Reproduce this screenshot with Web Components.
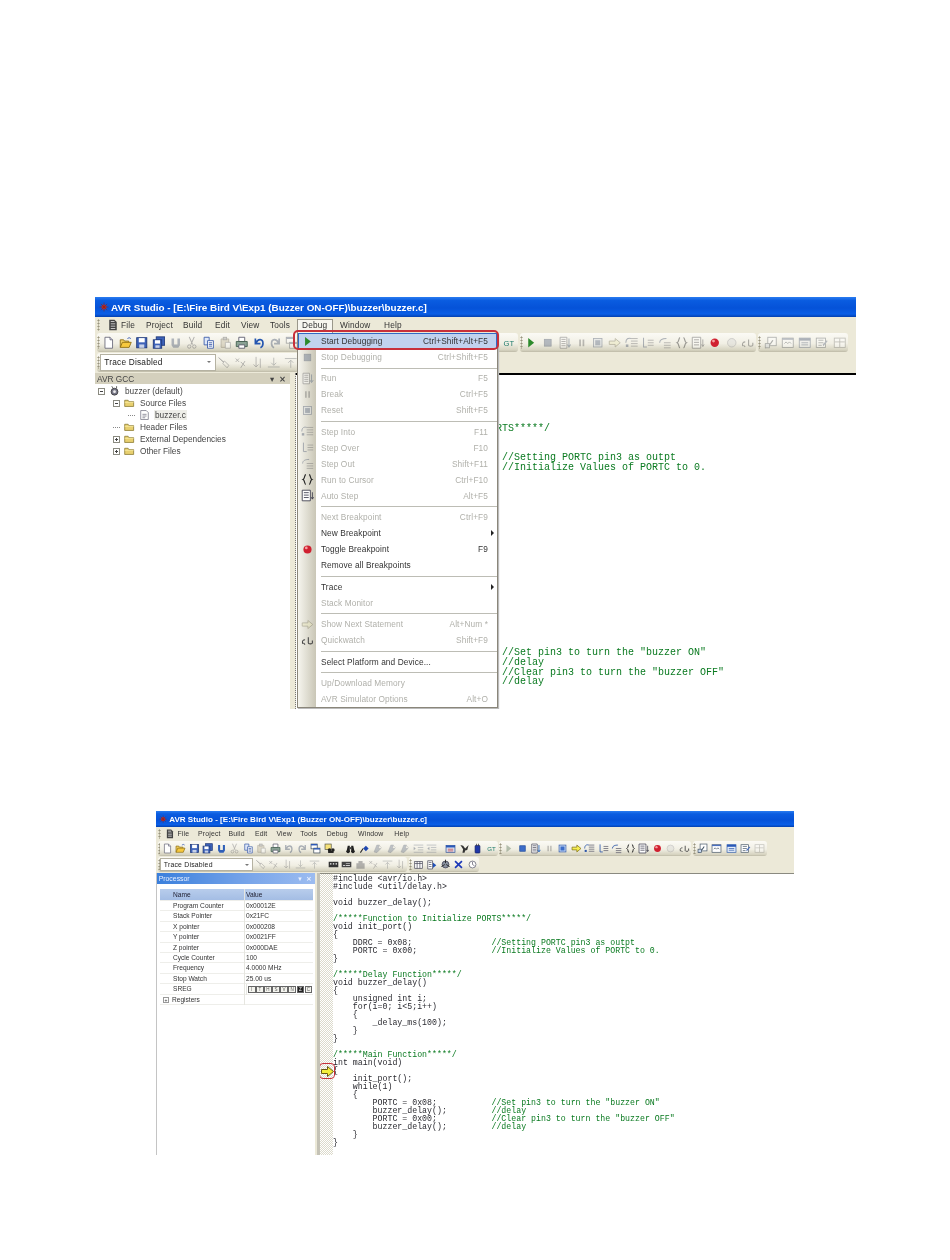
<!DOCTYPE html>
<html>
<head>
<meta charset="utf-8">
<title>AVR Studio</title>
<style>
  html, body { margin: 0; background: #fff; }
</style>
</head>
<body>
<doc-page>
  <ide-window size="large">
    <menu-bar></menu-bar>
    <tool-row>
      <tool-strip icons="new open save saveall ~blob ~cut copy ~paste print undo ~redo ~windows findwin || find diamond ~flag ~flag ~flag ~indent ~outdent | frm hammer chip gt"></tool-strip>
      <tool-strip icons="play ~stop ~run ~pause ~reset ~arrow ~stepin ~stepover ~stepout ~braces ~auto bp ~circle ~qw"></tool-strip>
      <tool-strip wide icons="~w1 ~w2 ~w3 ~w4 ~w5"></tool-strip>
    </tool-row>
    <tool-row>
      <tool-strip combo="Trace Disabled" icons="~t1 ~t2 ~t3 ~t4 ~t5"></tool-strip>
    </tool-row>
    <side-panel slot="panel" heading="AVR GCC">
      <tree-row level="0" exp="minus" icon="gear">buzzer (default)</tree-row>
      <tree-row level="1" exp="minus" icon="folder">Source Files</tree-row>
      <tree-row level="2" exp="dots" icon="file" selected>buzzer.c</tree-row>
      <tree-row level="1" exp="dots" icon="folder">Header Files</tree-row>
      <tree-row level="1" exp="plus" icon="folder">External Dependencies</tree-row>
      <tree-row level="1" exp="plus" icon="folder">Other Files</tree-row>
    </side-panel>
    <code-view slot="code" black from-col="31"></code-view>
    <debug-menu slot="overlay"></debug-menu>
  </ide-window>

  <ide-window size="small">
    <menu-bar plain></menu-bar>
    <tool-row>
      <tool-strip icons="new open save saveall blob ~cut copy ~paste print ~undo ~redo windows findwin || find diamond ~flag ~flag ~flag ~indent ~outdent | frm hammer chip gt"></tool-strip>
      <tool-strip icons="~play stop run ~pause reset arrow stepin stepover stepout braces auto bp ~circle qw"></tool-strip>
      <tool-strip wide icons="w1 w2 w3 w4 ~w5"></tool-strip>
    </tool-row>
    <tool-row>
      <tool-strip combo="Trace Disabled" icons="~t1 ~t2 ~t3 ~t4 ~t5 | mem1 mem2 ~mem3 ~t2 ~t5 ~t3"></tool-strip>
      <tool-strip icons="p1 p2 p3 xred p4"></tool-strip>
    </tool-row>
    <side-panel slot="panel" heading="Processor" active>
      <proc-table></proc-table>
    </side-panel>
    <code-view slot="code" marker gutter></code-view>
  </ide-window>
</doc-page>

<script>
const ICONS = {
  new: '<path d="M3.5 1.5h6l3 3v10h-9z" fill="#fff" stroke="#667"/><path d="M9.5 1.5v3h3" fill="#dde" stroke="#667"/>',
  open: '<path d="M1.5 13.5v-9h4l1 1.5h5v2" fill="#f2d060" stroke="#8a6a10"/><path d="M1.5 13.5l2.5-6h10.5l-2.5 6z" fill="#f7c93e" stroke="#8a6a10"/><path d="M10 3q2-2 4 0" fill="none" stroke="#2a50b0"/>',
  save: '<rect x="2" y="2" width="12" height="12" fill="#3d62b8" stroke="#1c3575"/><rect x="4.5" y="2.5" width="7" height="5" fill="#fff"/><rect x="5" y="10" width="6" height="4" fill="#c8d2e8"/>',
  saveall: '<rect x="5" y="1" width="10" height="10" fill="#3d62b8" stroke="#1c3575"/><rect x="1.5" y="4.5" width="10" height="10" fill="#3d62b8" stroke="#1c3575"/><rect x="3.5" y="5" width="6" height="4" fill="#fff"/><rect x="4" y="11" width="5" height="3" fill="#c8d2e8"/>',
  blob: '<path d="M3 3h3v7h4V3h3v8l-2 3H5l-2-3z" fill="#2f5fb8"/>',
  cut: '<path d="M5 1l4 9M11 1l-4 9" stroke="#556" stroke-width="1.2" fill="none"/><circle cx="5" cy="12.5" r="2" fill="none" stroke="#446"/><circle cx="11" cy="12.5" r="2" fill="none" stroke="#446"/>',
  copy: '<path d="M2.5 1.5h6v9h-6z" fill="#dfe8f8" stroke="#3558a8"/><path d="M6.5 5.5h7v9h-7z" fill="#fff" stroke="#3558a8"/><path d="M8 8h4M8 10h4M8 12h4" stroke="#3558a8"/>',
  paste: '<path d="M2.5 3.5h9v10h-9z" fill="#d8b860" stroke="#7a6020"/><rect x="5" y="1.5" width="4" height="3" fill="#999" stroke="#555"/><path d="M7.5 7.5h6v7h-6z" fill="#fff" stroke="#667"/>',
  print: '<path d="M4.5 1.5h7v5h-7z" fill="#fff" stroke="#556"/><path d="M1.5 6.5h13v6h-13z" fill="#8aa294" stroke="#3c5a4a"/><path d="M4.5 10.5h7v4h-7z" fill="#fff" stroke="#556"/>',
  undo: '<path d="M4 3v6h6M5 8c2-5 8-5 8 1 0 2-1 4-3 5" fill="none" stroke="#2456b0" stroke-width="2"/>',
  redo: '<path d="M12 3v6H6M11 8C9 3 3 3 3 9c0 2 1 4 3 5" fill="none" stroke="#2456b0" stroke-width="2"/>',
  windows: '<rect x="1.5" y="1.5" width="9" height="7" fill="#fff" stroke="#345"/><rect x="1.5" y="1.5" width="9" height="2" fill="#2a58b8"/><rect x="5.5" y="7.5" width="9" height="7" fill="#fff" stroke="#345"/><rect x="5.5" y="7.5" width="9" height="2" fill="#2a58b8"/>',
  findwin: '<rect x="1.5" y="1.5" width="9" height="8" fill="#f6e27a" stroke="#554"/><circle cx="8" cy="10" r="2.5" fill="#222"/><circle cx="13" cy="10" r="2.5" fill="#222"/><rect x="6" y="11" width="8" height="3.5" fill="#222"/>',
  find: '<path d="M2 13l2-9h3v9zM9 13V4h3l2 9z" fill="#222"/><circle cx="4.5" cy="12.5" r="2.5" fill="#222"/><circle cx="11.5" cy="12.5" r="2.5" fill="#222"/><rect x="6" y="6" width="4" height="3" fill="#444"/>',
  diamond: '<path d="M10 4l4 4-4 4-4-4z" fill="#1f47b0"/><path d="M2 14l4-6" stroke="#222" stroke-width="1.5"/>',
  flag: '<path d="M3 13l4-10h4l-2 5h4l-6 6z" fill="#5a7fc4" stroke="#2c4a8a" stroke-width=".7"/><path d="M10 3l4 4" stroke="#888"/>',
  indent: '<path d="M1 3h14M7 6.5h8M7 10h8M1 13.5h14" stroke="#3558a8"/><path d="M1 5.5l3 2.5-3 2.5z" fill="#3558a8"/>',
  outdent: '<path d="M1 3h14M7 6.5h8M7 10h8M1 13.5h14" stroke="#3558a8"/><path d="M5 5.5L2 8l3 2.5z" fill="#3558a8"/>',
  frm: '<rect x="1.5" y="3.5" width="13" height="10" fill="#dbe4f4" stroke="#2a4a90"/><rect x="1.5" y="3.5" width="13" height="3" fill="#2a58b8"/><path d="M4 9h8M4 11.5h8" stroke="#c03030"/>',
  hammer: '<path d="M2 3l4 1 3 4 5-5-2 7-3 1-1 3H5l1-5z" fill="#333"/>',
  chip: '<rect x="4.5" y="3.5" width="7" height="11" rx="1" fill="#2038a8" stroke="#101c60"/><path d="M6 1h1v3H6zM9 1h1v3H9z" fill="#333"/>',
  gt: '<text x="8" y="11.5" text-anchor="middle" font-family="Liberation Sans, sans-serif" font-size="9" fill="#1c7a6a">GT</text>',
  play: '<path d="M5 2.5l7 5.5-7 5.5z" fill="#2c8a2c"/>',
  stop: '<rect x="4" y="4" width="8" height="8" fill="#3c6cc8" stroke="#204a9a"/>',
  run: '<path d="M2.5 1.5h8v13h-8z" fill="#fff" stroke="#445"/><path d="M4 4h5M4 6.5h5M4 9h5M4 11.5h5" stroke="#445"/><path d="M13 3v9M11 10l2 3 2-3" fill="none" stroke="#1c5cb8" stroke-width="1.2"/>',
  pause: '<path d="M5 4h2v8H5zM9 4h2v8H9z" fill="#666"/>',
  reset: '<rect x="3" y="3" width="10" height="10" fill="#cfe0f8" stroke="#2b55a8"/><rect x="5" y="5" width="6" height="6" fill="#3c6cc8"/>',
  arrow: '<path d="M1.5 6h7V3l6 5-6 5v-3h-7z" fill="#f6ee50" stroke="#7a6a10"/>',
  stepin: '<path d="M7 3h8M7 6h8M7 9h8M7 12h8" stroke="#556"/><path d="M1 8c0-5 3-6 6-5" fill="none" stroke="#2b55a8" stroke-width="1.2"/><path d="M1 10h3v3H1z" fill="#2b55a8"/>',
  stepover: '<path d="M8 5h7M8 8h7M8 11h7" stroke="#556"/><path d="M3 2v11h4" fill="none" stroke="#2b55a8" stroke-width="1.2"/>',
  stepout: '<path d="M7 8h8M7 11h8M7 14h8" stroke="#556"/><path d="M2 8c0-4 4-5 8-5" fill="none" stroke="#2b55a8" stroke-width="1.2"/>',
  braces: '<path d="M6 2C4 2 5 7 2.5 8 5 9 4 14 6 14M10 2c2 0 1 5 3.5 6-2.5 1-1.5 6-3.5 6" fill="none" stroke="#222" stroke-width="1.4"/>',
  auto: '<path d="M1.5 1.5h10v13h-10z" fill="#fff" stroke="#334"/><path d="M3.5 4.5h6M3.5 7.5h6M3.5 10.5h6" stroke="#334"/><path d="M14 4v8M12.5 10l1.5 2.5 1.5-2.5" fill="none" stroke="#334"/>',
  bp: '<circle cx="8" cy="8" r="5" fill="#d02030"/><circle cx="6.5" cy="6" r="1.7" fill="#f4a0a0"/>',
  circle: '<circle cx="8" cy="8" r="5" fill="#d8d8d0" stroke="#889"/>',
  qw: '<path d="M2 12c-1-4 1-5 3-5M3 11l2 2M9 4v7c0 1.5 5 1.5 5 0V8" fill="none" stroke="#444" stroke-width="1.3"/>',
  w1: '<rect x="4.5" y="1.5" width="10" height="10" fill="#fff" stroke="#456"/><path d="M1.5 14c3-1 6-4 9-9" fill="none" stroke="#456" stroke-width="1.5"/><rect x="1.5" y="9" width="5" height="5" fill="#c8d8f0" stroke="#456"/>',
  w2: '<rect x="1.5" y="2.5" width="13" height="11" fill="#fff" stroke="#456"/><rect x="1.5" y="2.5" width="13" height="2" fill="#4a70c0"/><path d="M4 9l2-2 2 2 2-2 2 2" fill="none" stroke="#456"/>',
  w3: '<rect x="1.5" y="2.5" width="13" height="11" fill="#e6eefa" stroke="#2a58a8"/><rect x="1.5" y="2.5" width="13" height="3" fill="#2a58b8"/><path d="M4 8h8M4 10.5h8" stroke="#2a58a8"/>',
  w4: '<rect x="1.5" y="2.5" width="11" height="11" fill="#fff" stroke="#456"/><path d="M4 5h6M4 8h6M4 11h4" stroke="#456"/><path d="M9 10l5-5 1 1-5 6z" fill="#4a70c0"/>',
  w5: '<rect x="1.5" y="2.5" width="13" height="11" fill="#fff" stroke="#776"/><path d="M8 3v10M2 7h12" stroke="#776"/>',
  t1: '<path d="M2 2l5 5 2-1 5 5-2 3-5-5 1-2-6-5z" fill="none" stroke="#556"/>',
  t2: '<path d="M2 3l4 4M6 3L2 7M8 7l5 5M13 6l-5 8" fill="none" stroke="#556" stroke-width="1.1"/>',
  t3: '<path d="M6 1v12M3 10l3 3 3-3M11 3v11" fill="none" stroke="#556"/>',
  t4: '<path d="M1 13h14M8 2v9M5 8l3 3 3-3" fill="none" stroke="#567"/>',
  t5: '<path d="M1 3h14M8 14V5M5 8l3-3 3 3" fill="none" stroke="#567"/>',
  mem1: '<rect x="1" y="4" width="14" height="8" fill="#333"/><path d="M3 6h2v2H3zM7 6h2v2H7zM11 6h2v2h-2z" fill="#fff"/>',
  mem2: '<rect x="1" y="4" width="14" height="8" fill="#444"/><path d="M3 9h3v1H3zM7 6h6v1H7zM7 9h6v1H7z" fill="#fff"/>',
  mem3: '<path d="M2 14V6h3V3h6v3h3v8z" fill="#556"/>',
  p1: '<rect x="2.5" y="3.5" width="11" height="10" fill="#fff" stroke="#445"/><path d="M2.5 6.5h11M6 3.5v10M10 3.5v10" stroke="#445"/>',
  p2: '<path d="M2.5 2.5h7v12h-7z" fill="#fff" stroke="#445"/><path d="M4 5h4M4 8h4M4 11h4" stroke="#445"/><path d="M10 5l5 4-5 4z" fill="#2050b8"/>',
  p3: '<circle cx="8" cy="8" r="5" fill="#8a92a0" stroke="#334"/><path d="M8 1v5M2 11l5-3M14 11l-5-3" stroke="#222" stroke-width="1.3"/>',
  xred: '<path d="M3 3l10 10M13 3L3 13" stroke="#1c38b8" stroke-width="2.4"/>',
  p4: '<circle cx="8" cy="8" r="5" fill="#fff" stroke="#556"/><path d="M8 4v4l3 2" fill="none" stroke="#556"/>',
  gear: '<circle cx="8" cy="9" r="5" fill="#778" stroke="#222"/><circle cx="8" cy="9" r="2" fill="#eee"/><path d="M4 1l2 3M11 1v3" stroke="#222"/>',
  folder: '<path d="M1 13V4h5l1 2h7v7z" fill="#e8d070" stroke="#7a6a20"/><path d="M1 7h13" stroke="#fff4b0"/>',
  file: '<path d="M2.5 1.5h8l3 3v10h-11z" fill="#fff" stroke="#667"/><path d="M5 7h6M5 9.5h6M5 12h4" stroke="#667"/>',
  doc: '<path d="M3 1h7l3 3v11H3z" fill="#444"/><path d="M5 3h5v1H5zM5 6h6v1H5zM5 9h6v1H5zM5 12h6v1H5z" fill="#eee"/>',
  chipred: '<circle cx="8" cy="8" r="4" fill="#b83030"/><path d="M8 1v14M1 8h14M3 3l10 10M13 3L3 13" stroke="#8a2020"/>'
};

class DocPage extends HTMLElement {
  constructor() {
    super();
    this.attachShadow({ mode: 'open' }).innerHTML = `
      <style>
        :host { display: flex; flex-direction: column; padding-top: 297px; min-height: 963px; box-sizing: content-box; }
      </style>
      <slot></slot>`;
  }
}

class ToolIcon extends HTMLElement {
  constructor() {
    super();
    this.attachShadow({ mode: 'open' });
  }
  connectedCallback() {
    const name = this.getAttribute('name');
    this.shadowRoot.innerHTML = `
      <style>
        :host { display: inline-flex; align-items: center; justify-content: center; flex: none;
                width: var(--icon-box, var(--step)); }
        :host([faded]) svg { filter: grayscale(.7) opacity(.42); }
        svg { width: var(--icon, 14px); height: var(--icon, 14px); display: block; }
      </style>
      <svg viewBox="0 0 16 16">${ICONS[name] || ''}</svg>`;
  }
}

class IdeWindow extends HTMLElement {
  constructor() {
    super();
    this.attachShadow({ mode: 'open' }).innerHTML = `
      <style>
        :host { display: block; position: relative; overflow: hidden; box-sizing: border-box; background: #fff;
                font-family: "Liberation Sans", Arial, sans-serif; color: #222; filter: blur(.3px); }
        :host([size=large]) { margin-left: 95px; width: 761px; height: 412px;
                --u: 1px; --step: 16.7px; --icon: 13.5px; --title-h: 20px; --menu-h: 16px; --tb-h: 20px;
                --ui-font: 8.3px; --title-font: 9.9px; --code-font: 10px; --code-lh: 9.75px;
                --panel-w: 195px; --split-w: 6px; --gutter: 14px; --row-h: 12px; --split-line: 1px dotted #777; }
        :host([size=small]) { margin-left: 156px; margin-top: 102px; width: 638px; height: 344px;
                --u: .825px; --step: 13.5px; --icon: 11px; --title-h: 16px; --menu-h: 14px; --tb-h: 16px;
                --ui-font: 6.9px; --title-font: 8.07px; --code-font: 8.25px; --code-lh: 8px;
                --panel-w: 159px; --split-w: 5px; --gutter: 13px; --row-h: 10.45px; --split-line: 3px solid #c4c2b6; }
        .title { height: var(--title-h); display: flex; align-items: center; gap: calc(2 * var(--u));
                 padding-left: calc(4 * var(--u));
                 background: linear-gradient(#2a7cf0 0, #0a5ce0 18%, #0552d8 55%, #0a5ee6 85%, #0340b0 100%);
                 color: #fff; font-weight: bold; font-size: var(--title-font); white-space: pre; }
        .title tool-icon { --icon: calc(10 * var(--u)); --icon-box: calc(10 * var(--u)); }
        .bands { background: #ece9d8; }
        .body { display: flex; height: calc(100% - var(--title-h) - var(--menu-h) - 2 * var(--tb-h)); }
        .split { flex: none; width: var(--split-w); background: #ece9d8; box-sizing: border-box;
                 border-right: var(--split-line); }
        ::slotted(code-view) { flex: 1; min-width: 0; }
      </style>
      <div class="title"><tool-icon name="chipred"></tool-icon><span>AVR Studio - [E:\\Fire Bird V\\Exp1 (Buzzer ON-OFF)\\buzzer\\buzzer.c]</span></div>
      <div class="bands"><slot></slot></div>
      <div class="body">
        <slot name="panel"></slot>
        <div class="split"></div>
        <slot name="code"></slot>
      </div>
      <slot name="overlay"></slot>`;
  }
}

// menu names with their start-to-start widths, measured on the large window
const MENU_ITEMS = [['File', 25], ['Project', 37], ['Build', 32], ['Edit', 26], ['View', 29], ['Tools', 32], ['Debug', 38], ['Window', 44], ['Help', 30]];

class MenuBar extends HTMLElement {
  constructor() {
    super();
    const plain = this.hasAttribute('plain');
    const items = MENU_ITEMS.map(([t, w]) =>
      `<span class="item${t === 'Debug' && !plain ? ' open' : ''}" style="width:calc(${w} * var(--u))">${t}</span>`).join('');
    this.attachShadow({ mode: 'open' }).innerHTML = `
      <style>
        :host { display: flex; align-items: center; height: var(--menu-h); font-size: var(--ui-font);
                padding-left: calc(2 * var(--u)); letter-spacing: .15px; color: #333; }
        .grip { width: calc(7 * var(--u)); height: 70%; flex: none; box-sizing: border-box;
                background: radial-gradient(circle, #99957f 45%, transparent 50%) 0 0 / 3px 3px repeat-y; }
        tool-icon { --icon: calc(12 * var(--u)); --icon-box: calc(17 * var(--u)); }
        .item { flex: none; box-sizing: border-box; height: 100%; line-height: var(--menu-h); position: relative; z-index: 0; }
        .open::before { content: ""; position: absolute; left: calc(-5 * var(--u)); top: calc(2 * var(--u)); bottom: 0;
                        width: calc(36 * var(--u)); background: #f7f6f0; border: 1px solid #9a978a; border-bottom: 0;
                        box-sizing: border-box; z-index: -1; }
      </style>
      <span class="grip"></span><tool-icon name="doc"></tool-icon>${items}`;
  }
}

class ToolRow extends HTMLElement {
  constructor() {
    super();
    this.attachShadow({ mode: 'open' }).innerHTML = `
      <style>
        :host { display: flex; gap: calc(2 * var(--u)); height: var(--tb-h); padding-left: calc(2 * var(--u));
                box-sizing: border-box; padding-bottom: 1px; }
      </style>
      <slot></slot>`;
  }
}

class ToolStrip extends HTMLElement {
  constructor() {
    super();
    this.attachShadow({ mode: 'open' });
  }
  connectedCallback() {
    const combo = this.getAttribute('combo');
    const parts = (this.getAttribute('icons') || '').split(' ').map(tok => {
      if (tok === '|') return '<i class="sep small"></i>';
      if (tok === '||') return '<i class="sep big"></i>';
      const faded = tok.startsWith('~');
      return `<tool-icon name="${faded ? tok.slice(1) : tok}"${faded ? ' faded' : ''}></tool-icon>`;
    }).join('');
    this.shadowRoot.innerHTML = `
      <style>
        :host { display: flex; align-items: center; flex: none; border-radius: 3px; height: 100%;
                background: linear-gradient(#fbfaf5, #f1efe4 55%, #d6d3c0 90%, #bdb9a6); }
        :host([wide]) { --step: calc(17.2 * var(--u)); }
        .grip { flex: none; box-sizing: border-box; width: calc(var(--step) * .2); height: 70%;
                background: radial-gradient(circle, #99957f 45%, transparent 50%) 0 0 / 3px 3px repeat-y; }
        .sep { flex: none; display: block; }
        .small { width: calc(var(--step) * .4); }
        .big { width: calc(var(--step) * .6); }
        .combo { flex: none; box-sizing: border-box; width: calc(var(--step) * 6.9); height: 85%; background: #fff;
                 border: 1px solid #b5b2a2; font-size: var(--ui-font); display: flex; align-items: center;
                 justify-content: space-between; padding: 0 calc(4 * var(--u)) 0 calc(3 * var(--u)); color: #222; letter-spacing: .2px; }
        .combo b { width: 0; height: 0; border: calc(2.5 * var(--u)) solid transparent; border-top-color: #777; border-bottom: 0; }
      </style>
      <span class="grip"></span>${combo ? `<span class="combo">${combo}<b></b></span>` : ''}${parts}`;
  }
}

class SidePanel extends HTMLElement {
  constructor() {
    super();
    this.attachShadow({ mode: 'open' }).innerHTML = `
      <style>
        :host { display: block; flex: none; width: var(--panel-w); box-sizing: border-box; background: #fff;
                font-size: var(--ui-font); }
        :host([active]) { border-left: 1px solid #c4c4c4; }
        .head { height: calc(11 * var(--u)); display: flex; align-items: center; justify-content: space-between;
                background: #d4d0bd; color: #444; padding: 0 calc(4 * var(--u)) 0 calc(2 * var(--u)); }
        :host([active]) .head { background: linear-gradient(90deg, #3a7fdc, #7aa6ea 60%, #9cbcf0); color: #e8f0ff; height: 11px; }
        .btns { display: flex; gap: calc(5 * var(--u)); font-family: "DejaVu Sans", sans-serif; font-weight: bold; }
        .body { padding-top: calc(1 * var(--u)); }
      </style>
      <div class="head"><span id="h"></span><span class="btns"><span>▾</span><span>×</span></span></div>
      <div class="body"><slot></slot></div>`;
    this.shadowRoot.getElementById('h').textContent = this.getAttribute('heading');
  }
}

class TreeRow extends HTMLElement {
  constructor() {
    super();
    const level = +this.getAttribute('level');
    const exp = this.getAttribute('exp');
    const icon = this.getAttribute('icon');
    this.attachShadow({ mode: 'open' }).innerHTML = `
      <style>
        :host { display: flex; align-items: center; height: var(--row-h); color: #444;
                padding-left: ${3 + level * 15}px; white-space: nowrap; }
        .exp { flex: none; width: 7px; height: 7px; margin-right: 4px; box-sizing: border-box; border: 1px solid #8a8a80;
               position: relative; background: #fff; }
        .exp i { position: absolute; background: #444; }
        .exp .h { left: 1px; right: 1px; top: 2px; height: 1px; }
        .exp .v { top: 1px; bottom: 1px; left: 2px; width: 1px; }
        .dots { border: 0; border-bottom: 1px dotted #888; height: 4px; margin-bottom: 3px; background: none; }
        tool-icon { --icon: 12px; --icon-box: 11px; margin-right: 4px; }
        .txt { padding: 0 1px; }
        :host([selected]) .txt { background: #eeeee8; }
      </style>
      <span class="exp ${exp === 'dots' ? 'dots' : ''}">${exp === 'dots' ? '' : '<i class="h"></i>'}${exp === 'plus' ? '<i class="v"></i>' : ''}</span>
      <tool-icon name="${icon}"></tool-icon><span class="txt"><slot></slot></span>`;
  }
}

const PROC_ROWS = [
  ['Program Counter', '0x00012E'], ['Stack Pointer', '0x21FC'], ['X pointer', '0x000208'],
  ['Y pointer', '0x0021FF'], ['Z pointer', '0x000DAE'], ['Cycle Counter', '100'],
  ['Frequency', '4.0000 MHz'], ['Stop Watch', '25.00 us']
];

class ProcTable extends HTMLElement {
  constructor() {
    super();
    const rows = PROC_ROWS.map(([a, b]) => `<div class="r"><span>${a}</span><span>${b}</span></div>`).join('');
    const flags = [...'ITHSVNZC'].map(f => `<b class="${f === 'Z' ? 'on' : ''}">${f}</b>`).join('');
    this.attachShadow({ mode: 'open' }).innerHTML = `
      <style>
        :host { display: block; margin: 4px 2px 0 3px; font-size: 6.6px; color: #333; }
        .r { display: grid; grid-template-columns: 71px 1fr; height: 10.45px; line-height: 10.45px;
             padding-left: 13px; border-bottom: 1px solid #eeeeea; box-sizing: border-box; }
        .r span:last-child { border-left: 1px solid #e6e6e0; padding-left: 1px; }
        .hd { background: linear-gradient(#b8cdec, #a4bde4); height: 12px; line-height: 12px; color: #223; }
        .flags { display: flex; gap: .6px; align-items: center; height: 100%; }
        .flags b { width: 7.5px; height: 7px; border: .6px solid #666; box-sizing: border-box;
                   font: 4.5px/6px "Liberation Sans", sans-serif; text-align: center; color: #555; background: #f4f4ee; }
        .flags b.on { background: #222; color: #fff; }
        .reg { padding-left: 3px; grid-template-columns: 9px 72px 1fr; }
        .plus { width: 6px; height: 6px; border: .6px solid #999; box-sizing: border-box; margin-top: 2px;
                font: 5px/4.5px "Liberation Sans", sans-serif; text-align: center; }
      </style>
      <div class="r hd"><span>Name</span><span>Value</span></div>
      ${rows}
      <div class="r"><span>SREG</span><span><span class="flags">${flags}</span></span></div>
      <div class="r reg"><span class="plus">+</span><span>Registers</span><span></span></div>`;
  }
}

const CODE = `#include <avr/io.h>
#include <util/delay.h>

void buzzer_delay();

/*****Function to Initialize PORTS*****/
void init_port()
{
    DDRC = 0x08;                //Setting PORTC pin3 as outpt
    PORTC = 0x00;               //Initialize Values of PORTC to 0.
}

/*****Delay Function*****/
void buzzer_delay()
{
    unsigned int i;
    for(i=0; i<5;i++)
    {
        _delay_ms(100);
    }
}

/*****Main Function*****/
int main(void)
{
    init_port();
    while(1)
    {
        PORTC = 0x08;           //Set pin3 to turn the "buzzer ON"
        buzzer_delay();         //delay
        PORTC = 0x00;           //Clear pin3 to turn the "buzzer OFF"
        buzzer_delay();         //delay
    }
}`;

// fromCol drops what the debug menu covers, an empty box keeps the visible columns in place
function paintCode(src, fromCol) {
  const esc = s => s.replace(/&/g, '&amp;').replace(/</g, '&lt;');
  return src.split('\n').map(line => {
    const at = line.search(/\/\/|\/\*/);
    const code = at < 0 ? line : line.slice(0, at);
    const note = at < 0 ? '' : line.slice(at);
    const codeLeft = fromCol && !code.slice(fromCol).trim() ? '' : code.slice(fromCol);
    const noteLeft = note.slice(Math.max(0, fromCol - code.length));
    if (!codeLeft && !noteLeft) return '';
    const pad = fromCol ? `<i class="pad" style="width:${Math.max(fromCol, at < 0 ? 0 : at)}ch"></i>` : '';
    return pad + esc(codeLeft) + (noteLeft ? `<span class="c">${esc(noteLeft)}</span>` : '');
  }).join('\n');
}

class CodeView extends HTMLElement {
  constructor() {
    super();
    const marker = this.hasAttribute('marker') ? `
      <div class="mark"><svg width="13" height="11" viewBox="0 0 13 11"><path d="M.5 3.5h6V.5l6 5-6 5V7.5h-6z" fill="#f4ee3c" stroke="#6a5a10"/></svg></div>` : '';
    const fromCol = +(this.getAttribute('from-col') || 0);
    // the parser eats one newline right after <pre>, hence the extra one
    this.attachShadow({ mode: 'open' }).innerHTML = `
      <style>
        :host { display: block; position: relative; box-sizing: border-box; background: #fff; overflow: hidden;
                border-top: 1px solid #8a8a80; }
        :host([black]) { border-top: 2px solid #000; }
        .wrap { display: flex; height: 100%; }
        .gut { flex: none; width: var(--gutter); }
        :host([gutter]) .gut { background: repeating-conic-gradient(#dcdacb 0 25%, #fff 0 50%) 0 0 / 2px 2px; }
        pre { margin: 0; padding-top: 1px; font: var(--code-font)/var(--code-lh) "Liberation Mono", "Courier New", monospace; color: #2a2a30; }
        :host([black]) pre { padding-top: 0; }
        .pad { display: inline-block; height: 1px; }
        .c { color: #0a7a20; }
        .mark { position: absolute; left: -1px; top: 189px; width: 16px; height: 16px; box-sizing: border-box;
                border: 1.5px solid #c8303a; border-radius: 4px; display: flex; align-items: center; justify-content: center; }
      </style>
      <div class="wrap"><div class="gut"></div><pre>
${paintCode(CODE, fromCol)}</pre></div>${marker}`;
  }
}

class MenuRow extends HTMLElement {
  constructor() {
    super();
    this.attachShadow({ mode: 'open' });
  }
  connectedCallback() {
    const icon = this.getAttribute('icon');
    const keys = this.getAttribute('keys') || '';
    const enabled = this.hasAttribute('on');
    const solid = enabled || this.hasAttribute('dark');
    this.shadowRoot.innerHTML = `
      <style>
        :host { display: flex; align-items: center; height: 16px; box-sizing: border-box; position: relative;
                color: ${enabled ? '#333' : '#b0b0aa'}; white-space: nowrap; }
        :host([hot]) { background: #c1d2ee; outline: 1px solid #316ac5; outline-offset: -1px; color: #333; }
        .ic { flex: none; width: 18px; display: flex; justify-content: center; margin-right: 5px; }
        tool-icon { --icon: 13px; --icon-box: 14px; }
        .lbl { flex: 1; }
        .key { padding-right: 9px; }
        .sub { position: absolute; right: 3px; top: 5px; border: 3px solid transparent; border-left-color: #222; border-right: 0; }
      </style>
      <span class="ic">${icon ? `<tool-icon name="${icon}"${solid ? '' : ' faded'}></tool-icon>` : ''}</span>
      <span class="lbl"><slot></slot></span><span class="key">${keys}</span>${this.hasAttribute('sub') ? '<i class="sub"></i>' : ''}`;
  }
}

class MenuSep extends HTMLElement {
  constructor() {
    super();
    this.attachShadow({ mode: 'open' }).innerHTML = `
      <style>
        :host { display: block; height: 5.43px; position: relative; }
        i { position: absolute; left: 23px; right: 0; top: 2.5px; border-top: 1px solid #bdbdb5; }
      </style><i></i>`;
  }
}

class DebugMenu extends HTMLElement {
  constructor() {
    super();
    this.attachShadow({ mode: 'open' }).innerHTML = `
      <style>
        :host { position: absolute; left: 202px; top: 36px; width: 201px; height: 375px; box-sizing: border-box;
                border: 1px solid #8a867a; border-top: 0; box-shadow: 1px 1px 1px #bbb;
                background: linear-gradient(90deg, #f6f5ee 0, #c9c6b6 18px, #fff 18px);
                font-size: 8.3px; letter-spacing: .1px; }
        .ring { position: absolute; left: -5px; top: -3px; width: 206px; height: 20px; box-sizing: border-box;
                border: 2px solid #c8303a; border-radius: 5px; pointer-events: none; }
      </style>
      <menu-row hot on icon="play" keys="Ctrl+Shift+Alt+F5">Start Debugging</menu-row>
      <menu-row icon="stop" keys="Ctrl+Shift+F5">Stop Debugging</menu-row>
      <menu-sep></menu-sep>
      <menu-row icon="run" keys="F5">Run</menu-row>
      <menu-row icon="pause" keys="Ctrl+F5">Break</menu-row>
      <menu-row icon="reset" keys="Shift+F5">Reset</menu-row>
      <menu-sep></menu-sep>
      <menu-row icon="stepin" keys="F11">Step Into</menu-row>
      <menu-row icon="stepover" keys="F10">Step Over</menu-row>
      <menu-row icon="stepout" keys="Shift+F11">Step Out</menu-row>
      <menu-row dark icon="braces" keys="Ctrl+F10">Run to Cursor</menu-row>
      <menu-row dark icon="auto" keys="Alt+F5">Auto Step</menu-row>
      <menu-sep></menu-sep>
      <menu-row keys="Ctrl+F9">Next Breakpoint</menu-row>
      <menu-row on sub>New Breakpoint</menu-row>
      <menu-row on icon="bp" keys="F9">Toggle Breakpoint</menu-row>
      <menu-row on>Remove all Breakpoints</menu-row>
      <menu-sep></menu-sep>
      <menu-row on sub>Trace</menu-row>
      <menu-row>Stack Monitor</menu-row>
      <menu-sep></menu-sep>
      <menu-row icon="arrow" keys="Alt+Num *">Show Next Statement</menu-row>
      <menu-row dark icon="qw" keys="Shift+F9">Quickwatch</menu-row>
      <menu-sep></menu-sep>
      <menu-row on>Select Platform and Device...</menu-row>
      <menu-sep></menu-sep>
      <menu-row>Up/Download Memory</menu-row>
      <menu-row keys="Alt+O">AVR Simulator Options</menu-row>
      <div class="ring"></div>`;
  }
}

customElements.define('tool-icon', ToolIcon);
customElements.define('menu-bar', MenuBar);
customElements.define('tool-row', ToolRow);
customElements.define('tool-strip', ToolStrip);
customElements.define('tree-row', TreeRow);
customElements.define('proc-table', ProcTable);
customElements.define('side-panel', SidePanel);
customElements.define('code-view', CodeView);
customElements.define('menu-row', MenuRow);
customElements.define('menu-sep', MenuSep);
customElements.define('debug-menu', DebugMenu);
customElements.define('ide-window', IdeWindow);
customElements.define('doc-page', DocPage);
</script>
</body>
</html>
